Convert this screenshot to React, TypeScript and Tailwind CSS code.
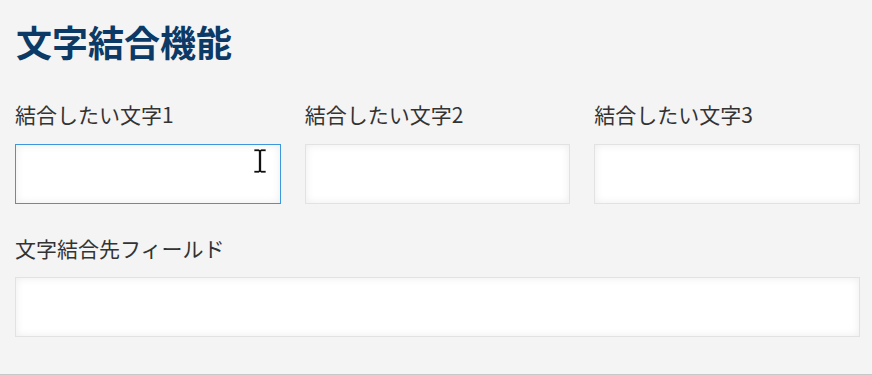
import React from "react";

const font = { fontFamily: '"Noto Sans CJK JP", "Noto Sans", sans-serif' };

function Field({ label, focused = false, cursor = false }: { label: string; focused?: boolean; cursor?: boolean }) {
  return (
    <div className="flex flex-col">
      <label className="text-[21px] leading-[30px] text-[#333333] mb-[15px]">{label}</label>
      <div
        className={
          "relative h-[60px] bg-white border shadow-[inset_0_0_8px_rgba(0,0,0,0.08)] " +
          (focused ? "border-[#3c97dc]" : "border-[#e2e2e2]")
        }
      >
        {cursor && (
          <svg className="absolute left-[237px] top-[3px]" width="14" height="26" viewBox="0 0 14 26">
            <path d="M1 1h5l1 1 1-1h5v2.5H8.5v19H13V25H8l-1-1-1 1H1v-2.5h4.5v-19H1z" fill="#111" stroke="#fff" strokeWidth="0.7" />
          </svg>
        )}
      </div>
    </div>
  );
}

export default function App() {
  return (
    <div className="h-[375px] w-[872px] bg-[#f4f4f4] border-b border-[#c8c8c8] pl-[15px] pr-[12px] pt-[18px]" style={font}>
      <h1 className="text-[36px] leading-[46px] font-bold text-[#0c3a66] mb-[35px] pl-[1px]">文字結合機能</h1>
      <div className="grid grid-cols-3 gap-x-[24px]">
        <Field label="結合したい文字1" focused cursor />
        <Field label="結合したい文字2" />
        <Field label="結合したい文字3" />
      </div>
      <div className="mt-[29px]">
        <label className="block text-[21px] leading-[30px] text-[#333333] mb-[14px]">文字結合先フィールド</label>
        <div className="h-[60px] bg-white border border-[#e2e2e2] shadow-[inset_0_0_8px_rgba(0,0,0,0.08)]" />
      </div>
    </div>
  );
}
